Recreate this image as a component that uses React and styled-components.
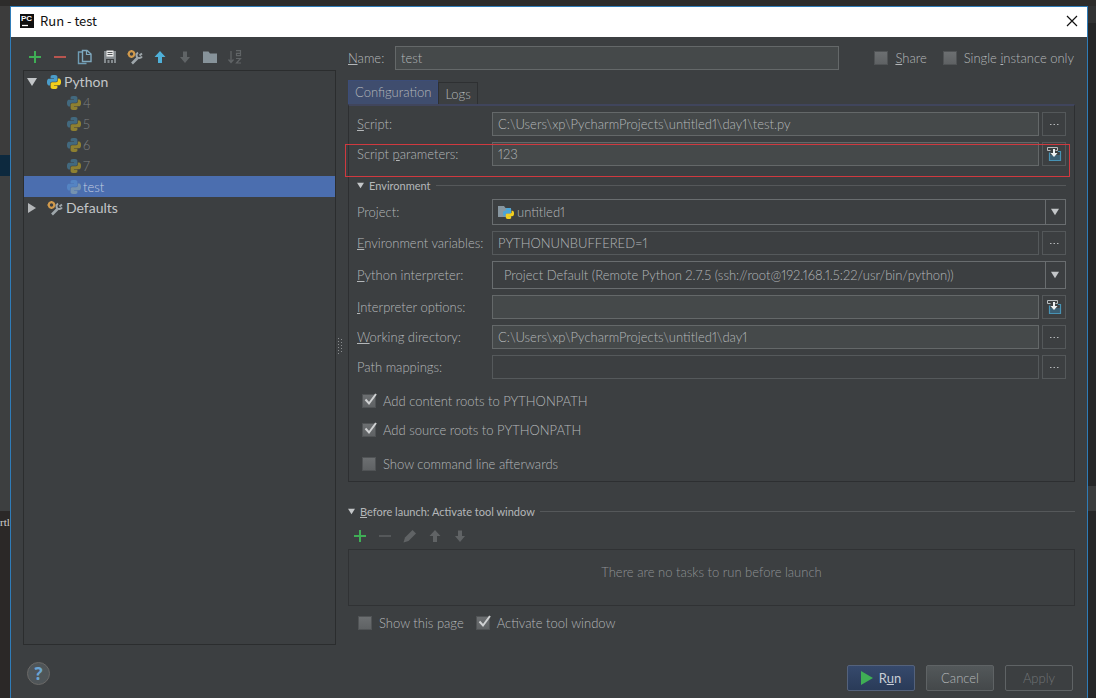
import React, { useState } from 'react';
import styled, { createGlobalStyle, css } from 'styled-components';

const GlobalStyle = createGlobalStyle`
    * { box-sizing: border-box; }
    body {
        margin: 0;
        background: #2b2b2b;
        color: #b4b7b9;
        font-family: Lato, "Noto Sans", sans-serif;
        font-size: 13px;
        font-weight: 300;
        font-variant-numeric: proportional-nums;
        line-height: 16px;
    }
    button, input, select {
        margin: 0;
        color: inherit;
        font: inherit;
        font-variant-numeric: proportional-nums;
    }
`;

/* ------ The editor that shows around the dialog ------ */
const Desktop = styled.div`
    display: grid;
    grid-template-columns: 10px minmax(0, 1fr) 8px;
    min-height: 100vh;
    padding-top: 6px;
    background: #2d2c2b;
`;

const Edge = styled.div`
    display: flex;
    flex-direction: column;
    overflow: hidden;
    background: ${(props) => props.$bg};
`;

const EdgeBlock = styled.div`
    flex: ${(props) => props.$h ? `0 0 ${props.$h}px` : '1'};
    background: ${(props) => props.$bg};
    color: #d0d0d0;
    font: 11px/22px "Liberation Serif", serif;
    white-space: nowrap;
`;

/* ------ Dialog ------ */
const Dialog = styled.main`
    display: flex;
    flex-direction: column;
    border: 1px solid #2f7cb8;
    border-bottom: 0;
    background: #3c3f41;
`;

const TitleBar = styled.header`
    display: flex;
    align-items: center;
    gap: 6px;
    height: 30px;
    padding: 0 7px 2px 9px;
    background: #fff;
    color: #111;
`;

const Title = styled.h1`
    flex: 1;
    margin: 0;
    font-family: "Noto Sans CJK KR", "Noto Sans", sans-serif;
    font-size: 13px;
    font-weight: 400;
`;

const PlainButton = styled.button`
    display: flex;
    align-items: center;
    justify-content: center;
    width: 16px;
    height: 16px;
    padding: 0;
    border: 0;
    background: none;
`;

const Body = styled.div`
    flex: 1;
    display: grid;
    grid-template-columns: 313px 12px minmax(0, 1fr);
    padding: 9px 12px 0;
`;

const Side = styled.section`
    display: flex;
    flex-direction: column;
`;

const Toolbar = styled.div`
    display: flex;
    gap: 9px;
    height: ${(props) => props.$h}px;
    padding: ${(props) => props.$pad};
`;

const Tree = styled.ul`
    flex: 1;
    margin: 0;
    padding: 0;
    border: 1px solid #2b2d2e;
    list-style: none;
`;

const TreeRow = styled.li`
    display: flex;
    align-items: center;
    gap: ${(props) => props.$leaf ? 2 : 3}px;
    height: 21px;
    padding-left: ${(props) => props.$leaf ? 43 : 3}px;
    color: ${(props) => props.$leaf ? '#7d8082' : '#c3c6c8'};
    font-size: ${(props) => props.$leaf ? 13 : 14}px;
    font-weight: ${(props) => props.$leaf ? 300 : 400};
    ${(props) => props.$selected && css`
        background: #4b6eaf;
        color: #c3cde0;
    `}
    svg { flex: none; }
`;

const Twisty = styled.span`
    display: flex;
    width: 17px;
`;

const Splitter = styled.div`
    display: flex;
    align-items: center;
    justify-content: flex-start;
    padding-left: 1px;
`;

const Main = styled.section`
    display: flex;
    flex-direction: column;
`;

const NameRow = styled.div`
    display: flex;
    align-items: center;
    height: 24px;
`;

const NameLabel = styled.label`
    width: 47px;
`;

const Field = styled.input`
    flex: 1;
    min-width: 0;
    height: 24px;
    padding: 0 5px;
    border: 1px solid ${(props) => props.readOnly ? '#55595b' : '#646869'};
    border-radius: 0;
    outline: 0;
    background: ${(props) => props.readOnly ? '#3c3f41' : '#45494a'};
`;

const NameChecks = styled.div`
    display: flex;
    gap: 16px;
    margin: 0 1px 0 35px;
`;

const TabBar = styled.div`
    display: flex;
    align-items: flex-end;
    height: 24px;
    margin-top: 10px;
`;

const Tab = styled.button`
    height: ${(props) => props.$active ? 24 : 22}px;
    padding: 0 6px ${(props) => props.$active ? 2 : 0}px;
    border: 1px solid ${(props) => props.$active ? '#3c4d78' : '#2e3032'};
    border-bottom: 0;
    background: ${(props) => props.$active ? '#3f4d6e' : '#3c3f41'};
`;

const Panel = styled.div`
    display: flex;
    flex-direction: column;
    gap: 6px;
    padding: 6px 8px 9px;
    border: 1px solid #2d2f31;
    border-top: 2px solid #40455c;
`;

const Row = styled.div`
    position: relative;
    display: flex;
    align-items: center;
    gap: 3px;
    ${(props) => props.$marked && css`
        &::after {
            content: '';
            position: absolute;
            inset: 2px -4px -11px -12px;
            border: 1px solid #d0393f;
            pointer-events: none;
        }
    `}
`;

const RowLabel = styled.label`
    width: 132px;
    white-space: nowrap;
`;

const SmallButton = styled.button`
    display: flex;
    align-items: center;
    justify-content: center;
    width: 24px;
    height: 24px;
    padding: 0;
    border: 1px solid #54585a;
    background: #3c3f41;
`;

const Combo = styled.div`
    position: relative;
    flex: 1;
    display: flex;
    align-items: center;
    height: ${(props) => props.$h}px;
    border: 1px solid #696d6f;
    > svg { position: absolute; pointer-events: none; }
    > svg.icon { left: 5px; }
    > svg.arrow { right: 6px; }
    &::after {
        content: '';
        position: absolute;
        right: 19px;
        height: 100%;
        border-right: 1px solid #696d6f;
    }
`;

const Select = styled.select`
    width: 100%;
    height: 100%;
    padding: 0 24px 0 ${(props) => props.$indent}px;
    border: 0;
    outline: 0;
    appearance: none;
    background: transparent;
`;

const SectionHead = styled.h2`
    display: flex;
    align-items: center;
    gap: 5px;
    margin: 0;
    padding-top: ${(props) => props.$top}px;
    font-size: 11px;
    font-weight: 400;
    line-height: 15px;
    &::after {
        content: '';
        flex: 1;
        border-top: 1px solid #55585a;
    }
`;

const Checks = styled.div`
    display: flex;
    flex-direction: column;
    gap: 13px;
    padding: 8px 5px 0;
`;

const CheckLabel = styled.label`
    position: relative;
    display: flex;
    align-items: center;
    gap: 7px;
    margin-top: ${(props) => props.$apart ? 5 : 0}px;
    white-space: nowrap;
    svg {
        position: absolute;
        left: 1px;
        top: -1px;
        pointer-events: none;
    }
`;

const CheckBox = styled.input`
    appearance: none;
    width: 14px;
    height: 14px;
    border: 1px solid #505355;
    background: linear-gradient(#6c6f71, #5f6264);
`;

const Tasks = styled.div`
    height: 57px;
    padding-top: 14px;
    border: 1px solid #303234;
    color: #8f9294;
    text-align: center;
`;

const PageChecks = styled.div`
    display: flex;
    gap: 12px;
    padding: 9px 10px 14px;
`;

const Footer = styled.footer`
    display: flex;
    justify-content: space-between;
    padding: 17px 14px 7px 16px;
`;

const Actions = styled.div`
    display: flex;
    gap: 11px;
    padding-top: 3px;
`;

const Action = styled.button`
    display: flex;
    align-items: center;
    justify-content: center;
    gap: 6px;
    width: 68px;
    height: 26px;
    padding: 0;
    border: 1px solid #5f6365;
    border-radius: 2px;
    background: linear-gradient(#53585a, #44484a);
    ${(props) => props.$primary && css`
        border-color: #54627c;
        background: linear-gradient(#36496c, #2a3b58);
        color: #c8cdd6;
        font-weight: 400;
    `}
    &:disabled {
        background: #3c3f41;
        color: #707375;
    }
`;

const Help = styled.button`
    width: 23px;
    height: 23px;
    padding: 0;
    border: 1px solid #6a6967;
    border-radius: 50%;
    background: #4f5558;
    color: #6ba5d4;
    font: bold 17px/20px "Open Sans", sans-serif;
`;

/* ------ Icons ------ */
const Icon = ({ children, ...rest }) => (
    <svg width='16' height='16' viewBox='0 0 16 16' fill='none' aria-hidden='true' {...rest}>
        {children}
    </svg>
);

const PY_TOP = 'M14.25.18l.9.2.73.26.59.3.45.32.34.34.25.34.16.33.1.3.04.26.02.2-.01.13V8.5l-.05.63-.13.55-.21.46-.26.38-.3.31-.33.25-.35.19-.35.14-.33.1-.3.07-.26.04-.21.02H8.77l-.69.05-.59.14-.5.22-.41.27-.33.32-.27.35-.2.36-.15.37-.1.35-.07.32-.04.27-.02.21v3.06H3.17l-.21-.03-.28-.07-.32-.12-.35-.18-.36-.26-.36-.36-.35-.46-.32-.59-.28-.73-.21-.88-.14-1.05-.05-1.23.06-1.22.16-1.04.24-.87.32-.71.36-.57.4-.44.42-.33.42-.24.4-.16.36-.1.32-.05.24-.01h.16l.06.01h8.16v-.83H6.18l-.01-2.75-.02-.37.05-.34.11-.31.17-.28.25-.26.31-.23.38-.2.44-.18.51-.15.58-.12.64-.1.71-.06.77-.04.84-.02 1.27.05z';
const PY_BOTTOM = 'M21.04 6.11l.28.06.32.12.35.18.36.27.36.35.35.47.32.59.28.73.21.88.14 1.04.05 1.23-.06 1.23-.16 1.04-.24.86-.32.71-.36.57-.4.45-.42.33-.42.24-.4.16-.36.09-.32.05-.24.02-.16-.01h-8.22v.82h5.84l.01 2.76.02.36-.05.34-.11.31-.17.29-.25.25-.31.24-.38.2-.44.17-.51.15-.58.13-.64.09-.71.07-.77.04-.84.01-1.27-.04-1.07-.14-.9-.2-.73-.25-.59-.3-.45-.33-.34-.34-.25-.34-.16-.33-.1-.3-.04-.25-.02-.2.01-.13v-5.34l.05-.64.13-.54.21-.46.26-.38.3-.32.33-.24.35-.2.35-.14.33-.1.3-.06.26-.04.21-.02.13-.01h5.84l.69-.05.59-.14.5-.21.41-.28.33-.32.27-.35.2-.36.15-.36.1-.35.07-.32.04-.28.02-.21V6.07h2.09l.14.01z';

const PythonIcon = ({ faded, selected }) => (
    <svg width='14' height='14' viewBox='0 0 24 24' opacity={faded ? 0.45 : 1} aria-hidden='true'>
        <path d={PY_TOP} fill={selected ? '#5fa0dc' : '#4a9cc9'} />
        <path d={PY_BOTTOM} fill={selected ? '#a9bfae' : '#f2cf1d'} />
    </svg>
);

const PlusIcon = () => <Icon><path d='M8 2v12M2 8h12' stroke='#3fae55' strokeWidth='2' /></Icon>;
const MinusIcon = ({ color }) => <Icon><path d='M2 8h12' stroke={color} strokeWidth='2' /></Icon>;
const UpIcon = ({ color }) => <Icon><path d='M8 2l5.5 6H10v6H6V8H2.500z' fill={color} /></Icon>;
const DownIcon = ({ color }) => <Icon><path d='M8 14l5-6h-3V2.500H6V8H3z' fill={color} /></Icon>;

const CopyIcon = () => (
    <Icon>
        <path d='M5 3H1.500v11.500h8' stroke='#6f9db5' strokeWidth='1.400' />
        <path d='M5.500 1.500h4.500l4 3.500v7.500H5.500z' stroke='#7fa9bf' strokeWidth='1.400' />
        <path d='M9.500 1.500V5.500h4.500' stroke='#7fa9bf' strokeWidth='1.200' />
    </Icon>
);

const SaveIcon = () => (
    <Icon>
        <path d='M2 2h12v12h-2v-4H4v4H2z' fill='#858b8f' />
        <path d='M4.500 1.500h7v6h-7z' fill='#ececec' />
        <path d='M5.500 3.500h5M5.500 5.500h5' stroke='#55585a' />
        <path d='M5.500 11h2v3h-2zM9 11h2v3H9z' fill='#858b8f' />
    </Icon>
);

const ToolsIcon = () => (
    <Icon>
        <circle cx='4.500' cy='5' r='2.700' stroke='#d19a4c' strokeWidth='2' />
        <path d='M4.500 1v1.500M4.500 7.500V9M.5 5H2M7 5h1.500' stroke='#d19a4c' strokeWidth='1.500' />
        <path d='M5 14.500l5.500-5.500' stroke='#9fa7ab' strokeWidth='2.600' />
        <path d='M11 3.500c-1.500 1-2 3-1 4.500s3.500 1.500 5-.5M15 4.500l-2.500 2' stroke='#9fa7ab' strokeWidth='2' />
    </Icon>
);

const FolderIcon = () => <Icon><path d='M1 2.500h5.500l1.500 2h7v9.500H1z' fill='#87939a' /></Icon>;

const SortIcon = () => (
    <Icon>
        <path d='M4 2v11M1.500 10.500L4 13.500l2.500-3' stroke='#606466' strokeWidth='1.300' />
        <path d='M9 1.700h4.500v5H9.500V4.300h4M9 9.500h4.500l-4 4.500h4.500' stroke='#606466' strokeWidth='1.200' />
    </Icon>
);

const PencilIcon = () => <Icon><path d='M1.500 14.500l1.500-5L10.500 2l3.500 3.500L6.500 13z' fill='#606365' /></Icon>;

const InsertIcon = () => (
    <Icon>
        <path d='M4.500 4.500h-3v-3h10v3h-2' stroke='#b9bdbf' />
        <path d='M4.500 7H3.500v7.500h11V5.500H12' stroke='#4793b5' strokeWidth='1.200' />
        <path d='M4 9h10v5H4z' fill='#3b7fa5' opacity='.5' />
        <path d='M7 3h2v4h2.500L8 11 4.500 7H7z' fill='#eef1f2' />
    </Icon>
);

const ProjectIcon = () => (
    <Icon className='icon'>
        <path d='M0 2h6l1.500 2H13v9H0z' fill='#8796a0' />
        <svg x='5' y='4' width='11' height='11' viewBox='0 0 24 24'>
            <path d={PY_TOP} fill='#4aa5d8' />
            <path d={PY_BOTTOM} fill='#f2cf1d' />
        </svg>
    </Icon>
);

const ArrowDown = ({ size = 7, ...rest }) => (
    <svg width={size} height={size} viewBox='0 0 10 10' aria-hidden='true' {...rest}>
        <path d='M0 1h10L5 9z' fill='#c3c6c8' />
    </svg>
);

const AppIcon = () => (
    <svg width='14' height='14' viewBox='0 0 14 14' aria-hidden='true'>
        <path d='M0 0h14v14H0z' fill='#101010' />
        <text x='1' y='7' fill='#fff' fontFamily='Liberation Sans' fontSize='8' fontWeight='700'>PC</text>
        <path d='M2 11.500h6' stroke='#fff' strokeWidth='1.300' />
    </svg>
);

/* ------ Parts ------ */
const Check = ({ checked, apart, children }) => {
    const [on, setOn] = useState(!!checked);
    return (
        <CheckLabel $apart={apart}>
            <CheckBox type='checkbox' checked={on} onChange={() => setOn(!on)} />
            {on && <Icon><path d='M2.500 7.500L6 11.500 13 2' stroke='#d0d2d3' strokeWidth='2' /></Icon>}
            <span>{children}</span>
        </CheckLabel>
    );
};

const TextRow = ({ id, label, value, readOnly, insert, marked }) => (
    <Row $marked={marked}>
        <RowLabel htmlFor={id}>{label}</RowLabel>
        <Field id={id} defaultValue={value} readOnly={readOnly} />
        <SmallButton type='button' aria-label={insert ? 'Insert' : 'Browse'}>
            {insert ? <InsertIcon /> : <Icon><path d='M4 8.500h1.500M7.500 8.500H9M11 8.500h1.500' stroke='#b4b7b9' /></Icon>}
        </SmallButton>
    </Row>
);

const ComboRow = ({ id, label, option, height, indent, icon }) => (
    <Row>
        <RowLabel htmlFor={id}>{label}</RowLabel>
        <Combo $h={height}>
            {icon}
            <Select id={id} $indent={indent}>
                <option>{option}</option>
            </Select>
            <ArrowDown className='arrow' size={8} />
        </Combo>
    </Row>
);

const tools = [
    ['Add', <PlusIcon />],
    ['Remove', <MinusIcon color='#b8554f' />],
    ['Copy', <CopyIcon />],
    ['Save', <SaveIcon />],
    ['Edit defaults', <ToolsIcon />],
    ['Move up', <UpIcon color='#4fb0d8' />],
    ['Move down', <DownIcon color='#606466' />],
    ['New folder', <FolderIcon />],
    ['Sort', <SortIcon />],
];

const taskTools = [
    ['Add task', <PlusIcon />],
    ['Remove task', <MinusIcon color='#55585a' />],
    ['Edit task', <PencilIcon />],
    ['Move task up', <UpIcon color='#606365' />],
    ['Move task down', <DownIcon color='#606365' />],
];

const configs = ['4', '5', '6', '7', 'test'];

export default function App() {
    return (
        <Desktop>
            <GlobalStyle />
            <Edge $bg='#3c3c3c'>
                <EdgeBlock $h={149} $bg='#3c3c3c' />
                <EdgeBlock $h={21} $bg='#0d293e' />
                <EdgeBlock $h={335} $bg='#3d3f40' />
                <EdgeBlock $bg='#2b2827'>rtl</EdgeBlock>
            </Edge>

            <Dialog>
                <TitleBar>
                    <AppIcon />
                    <Title>Run - test</Title>
                    <PlainButton type='button' aria-label='Close'>
                        <Icon><path d='M3 3l10 10M13 3L3 13' stroke='#111' strokeWidth='1.200' /></Icon>
                    </PlainButton>
                </TitleBar>

                <Body>
                    <Side>
                        <Toolbar $h={24} $pad='3px 4px'>
                            {tools.map(([name, icon]) => (
                                <PlainButton type='button' key={name} aria-label={name}>{icon}</PlainButton>
                            ))}
                        </Toolbar>
                        <Tree>
                            <TreeRow>
                                <Twisty><ArrowDown size={10} /></Twisty>
                                <PythonIcon />
                                <span>Python</span>
                            </TreeRow>
                            {configs.map((name) => (
                                <TreeRow key={name} $leaf $selected={name === 'test'}>
                                    <PythonIcon faded selected={name === 'test'} />
                                    <span>{name}</span>
                                </TreeRow>
                            ))}
                            <TreeRow>
                                <Twisty>
                                    <svg width='10' height='10' viewBox='0 0 10 10' aria-hidden='true'>
                                        <path d='M1 0v10l8-5z' fill='#b4b7b9' />
                                    </svg>
                                </Twisty>
                                <ToolsIcon />
                                <span>Defaults</span>
                            </TreeRow>
                        </Tree>
                    </Side>

                    <Splitter>
                        <svg width='6' height='16' viewBox='0 0 6 16' aria-hidden='true'>
                            <path d='M1.500 0v16M4.500 1v15' stroke='#8a8d8f' strokeDasharray='1 2' />
                        </svg>
                    </Splitter>

                    <Main>
                        <NameRow>
                            <NameLabel htmlFor='name'><u>N</u>ame:</NameLabel>
                            <Field id='name' defaultValue='test' />
                            <NameChecks>
                                <Check><u>S</u>hare</Check>
                                <Check>Single <u>i</u>nstance only</Check>
                            </NameChecks>
                        </NameRow>

                        <TabBar>
                            <Tab type='button' $active>Configuration</Tab>
                            <Tab type='button'>Logs</Tab>
                        </TabBar>

                        <Panel>
                            <TextRow id='script' label={<><u>S</u>cript:</>} value='C:\Users\xp\PycharmProjects\untitled1\day1\test.py' />
                            <TextRow id='params' label={<>Script <u>p</u>arameters:</>} value='123' insert marked />
                            <SectionHead $top={6}><ArrowDown />Environment</SectionHead>
                            <ComboRow id='project' label={<>Pro<u>j</u>ect:</>} option='untitled1' height={26} indent={24} icon={<ProjectIcon />} />
                            <TextRow id='env' label={<><u>E</u>nvironment variables:</>} value='PYTHONUNBUFFERED=1' readOnly />
                            <ComboRow
                                id='interpreter'
                                label={<><u>P</u>ython interpreter:</>}
                                option='Project Default (Remote Python 2.7.5 (ssh://root@192.168.1.5:22/usr/bin/python))'
                                height={28}
                                indent={11}
                            />
                            <TextRow id='options' label={<><u>I</u>nterpreter options:</>} insert />
                            <TextRow id='workdir' label={<><u>W</u>orking directory:</>} value='C:\Users\xp\PycharmProjects\untitled1\day1' />
                            <TextRow id='mappings' label='Path mappings:' readOnly />
                            <Checks>
                                <Check checked>Add content roots to PYTHONPATH</Check>
                                <Check checked>Add source roots to PYTHONPATH</Check>
                                <Check apart>Show command line afterwards</Check>
                            </Checks>
                        </Panel>

                        <SectionHead $top={22}><ArrowDown /><span><u>B</u>efore launch: Activate tool window</span></SectionHead>
                        <Toolbar $h={30} $pad='9px 4px'>
                            {taskTools.map(([name, icon]) => (
                                <PlainButton type='button' key={name} aria-label={name}>{icon}</PlainButton>
                            ))}
                        </Toolbar>
                        <Tasks>There are no tasks to run before launch</Tasks>
                        <PageChecks>
                            <Check>Show this page</Check>
                            <Check checked>Activate tool window</Check>
                        </PageChecks>
                    </Main>
                </Body>

                <Footer>
                    <Help type='button' aria-label='Help'>?</Help>
                    <Actions>
                        <Action type='button' $primary>
                            <svg width='12' height='14' viewBox='0 0 12 14' aria-hidden='true'>
                                <path d='M0 0l12 7-12 7z' fill='#3fae55' />
                            </svg>
                            <span>R<u>u</u>n</span>
                        </Action>
                        <Action type='button'>Cancel</Action>
                        <Action type='button' disabled>Apply</Action>
                    </Actions>
                </Footer>
            </Dialog>

            <Edge $bg='#2b2b2b'>
                <EdgeBlock $h={17} $bg='#323334' />
                <EdgeBlock $h={463} $bg='#262728' />
                <EdgeBlock $h={25} $bg='#3a3c3d' />
                <EdgeBlock $bg='#262728' />
            </Edge>
        </Desktop>
    );
}
